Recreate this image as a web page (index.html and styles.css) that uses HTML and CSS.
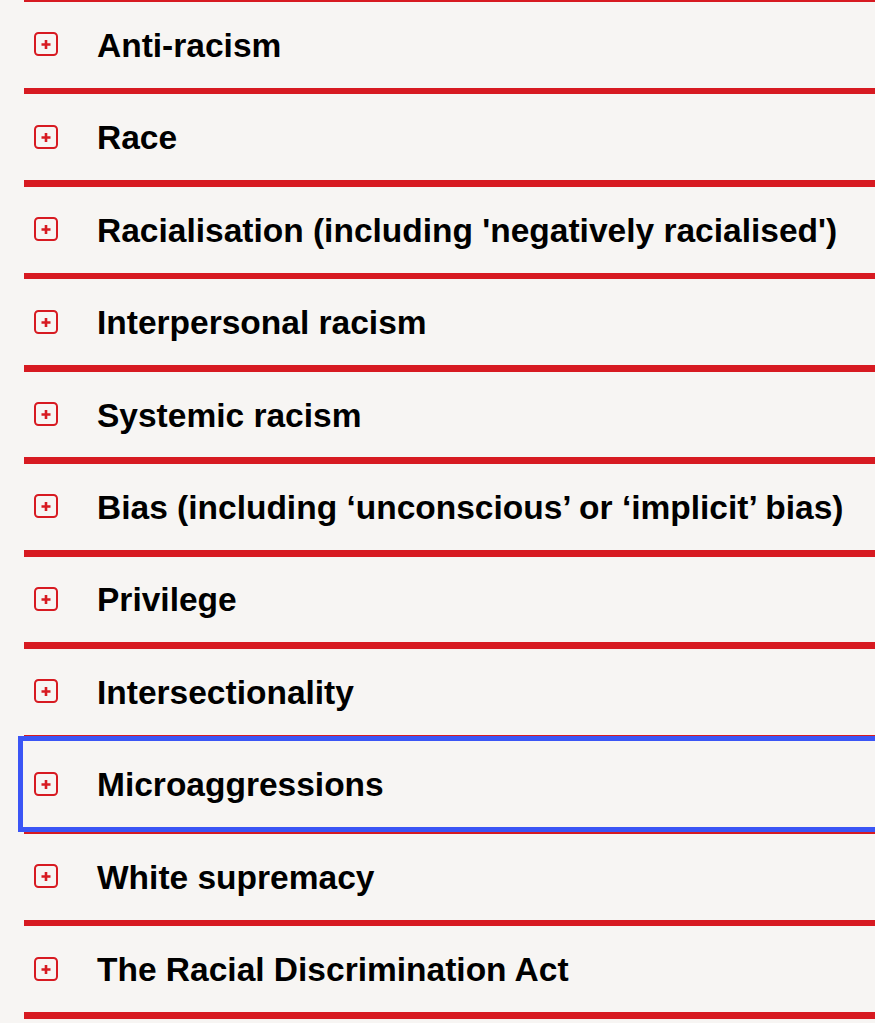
FILE: index.html
```html
<!DOCTYPE html>
<html lang="en">
<head>
<meta charset="utf-8">
<title>Glossary</title>
<link rel="stylesheet" href="styles.css">
</head>
<body>
<ul class="accordion">
  <li class="item"><button class="toggle"><svg class="icon" viewBox="0 0 24 24"><rect x="1" y="1" width="22" height="22" rx="3.5"/><path d="M7.5 12.5h9M12 8v9"/></svg><span class="label">Anti-racism</span></button></li>
  <li class="item"><button class="toggle"><svg class="icon" viewBox="0 0 24 24"><rect x="1" y="1" width="22" height="22" rx="3.5"/><path d="M7.5 12.5h9M12 8v9"/></svg><span class="label">Race</span></button></li>
  <li class="item"><button class="toggle"><svg class="icon" viewBox="0 0 24 24"><rect x="1" y="1" width="22" height="22" rx="3.5"/><path d="M7.5 12.5h9M12 8v9"/></svg><span class="label">Racialisation (including 'negatively racialised')</span></button></li>
  <li class="item"><button class="toggle"><svg class="icon" viewBox="0 0 24 24"><rect x="1" y="1" width="22" height="22" rx="3.5"/><path d="M7.5 12.5h9M12 8v9"/></svg><span class="label">Interpersonal racism</span></button></li>
  <li class="item"><button class="toggle"><svg class="icon" viewBox="0 0 24 24"><rect x="1" y="1" width="22" height="22" rx="3.5"/><path d="M7.5 12.5h9M12 8v9"/></svg><span class="label">Systemic racism</span></button></li>
  <li class="item"><button class="toggle"><svg class="icon" viewBox="0 0 24 24"><rect x="1" y="1" width="22" height="22" rx="3.5"/><path d="M7.5 12.5h9M12 8v9"/></svg><span class="label">Bias (including ‘unconscious’ or ‘implicit’ bias)</span></button></li>
  <li class="item"><button class="toggle"><svg class="icon" viewBox="0 0 24 24"><rect x="1" y="1" width="22" height="22" rx="3.5"/><path d="M7.5 12.5h9M12 8v9"/></svg><span class="label">Privilege</span></button></li>
  <li class="item"><button class="toggle"><svg class="icon" viewBox="0 0 24 24"><rect x="1" y="1" width="22" height="22" rx="3.5"/><path d="M7.5 12.5h9M12 8v9"/></svg><span class="label">Intersectionality</span></button></li>
  <li class="item"><button class="toggle is-focused"><svg class="icon" viewBox="0 0 24 24"><rect x="1" y="1" width="22" height="22" rx="3.5"/><path d="M7.5 12.5h9M12 8v9"/></svg><span class="label">Microaggressions</span></button></li>
  <li class="item"><button class="toggle"><svg class="icon" viewBox="0 0 24 24"><rect x="1" y="1" width="22" height="22" rx="3.5"/><path d="M7.5 12.5h9M12 8v9"/></svg><span class="label">White supremacy</span></button></li>
  <li class="item item-last"><button class="toggle"><svg class="icon" viewBox="0 0 24 24"><rect x="1" y="1" width="22" height="22" rx="3.5"/><path d="M7.5 12.5h9M12 8v9"/></svg><span class="label">The Racial Discrimination Act</span></button></li>
</ul>
</body>
</html>
```

FILE: styles.css
```css
html {
  overflow-x: hidden;
  background: #f7f5f3;
}

body {
  margin: 0;
  background: #f7f5f3;
  font-family: "Liberation Sans", Arial, Helvetica, sans-serif;
}

.accordion {
  list-style: none;
  margin: -4.7px -20px 0 24px;
  padding: 0;
}

.item::before {
  content: "";
  display: block;
  height: 6.66px;
  background: #d71a21;
}

.item-last::after {
  content: "";
  display: block;
  height: 6.66px;
  background: #d71a21;
}

.toggle {
  display: flex;
  align-items: center;
  gap: 39px;
  width: 100%;
  height: 85.78px;
  margin: 0;
  padding: 2px 0 0 10px;
  border: 0;
  background: transparent;
  color: #000;
  font-family: inherit;
  font-size: 33.5px;
  font-weight: 700;
  text-align: left;
  cursor: pointer;
}

.icon {
  flex: none;
  width: 24px;
  height: 24px;
  margin-top: -3px;
  fill: none;
  stroke: #d71a21;
}

.icon rect {
  stroke-width: 2;
}

.icon path {
  stroke-width: 2.6;
}

.label {
  white-space: nowrap;
}

.is-focused {
  outline: 5px solid #3b55f5;
  outline-offset: 0;
  margin-left: -1px;
  padding-left: 11px;
  width: calc(100% + 1px);
}
```
